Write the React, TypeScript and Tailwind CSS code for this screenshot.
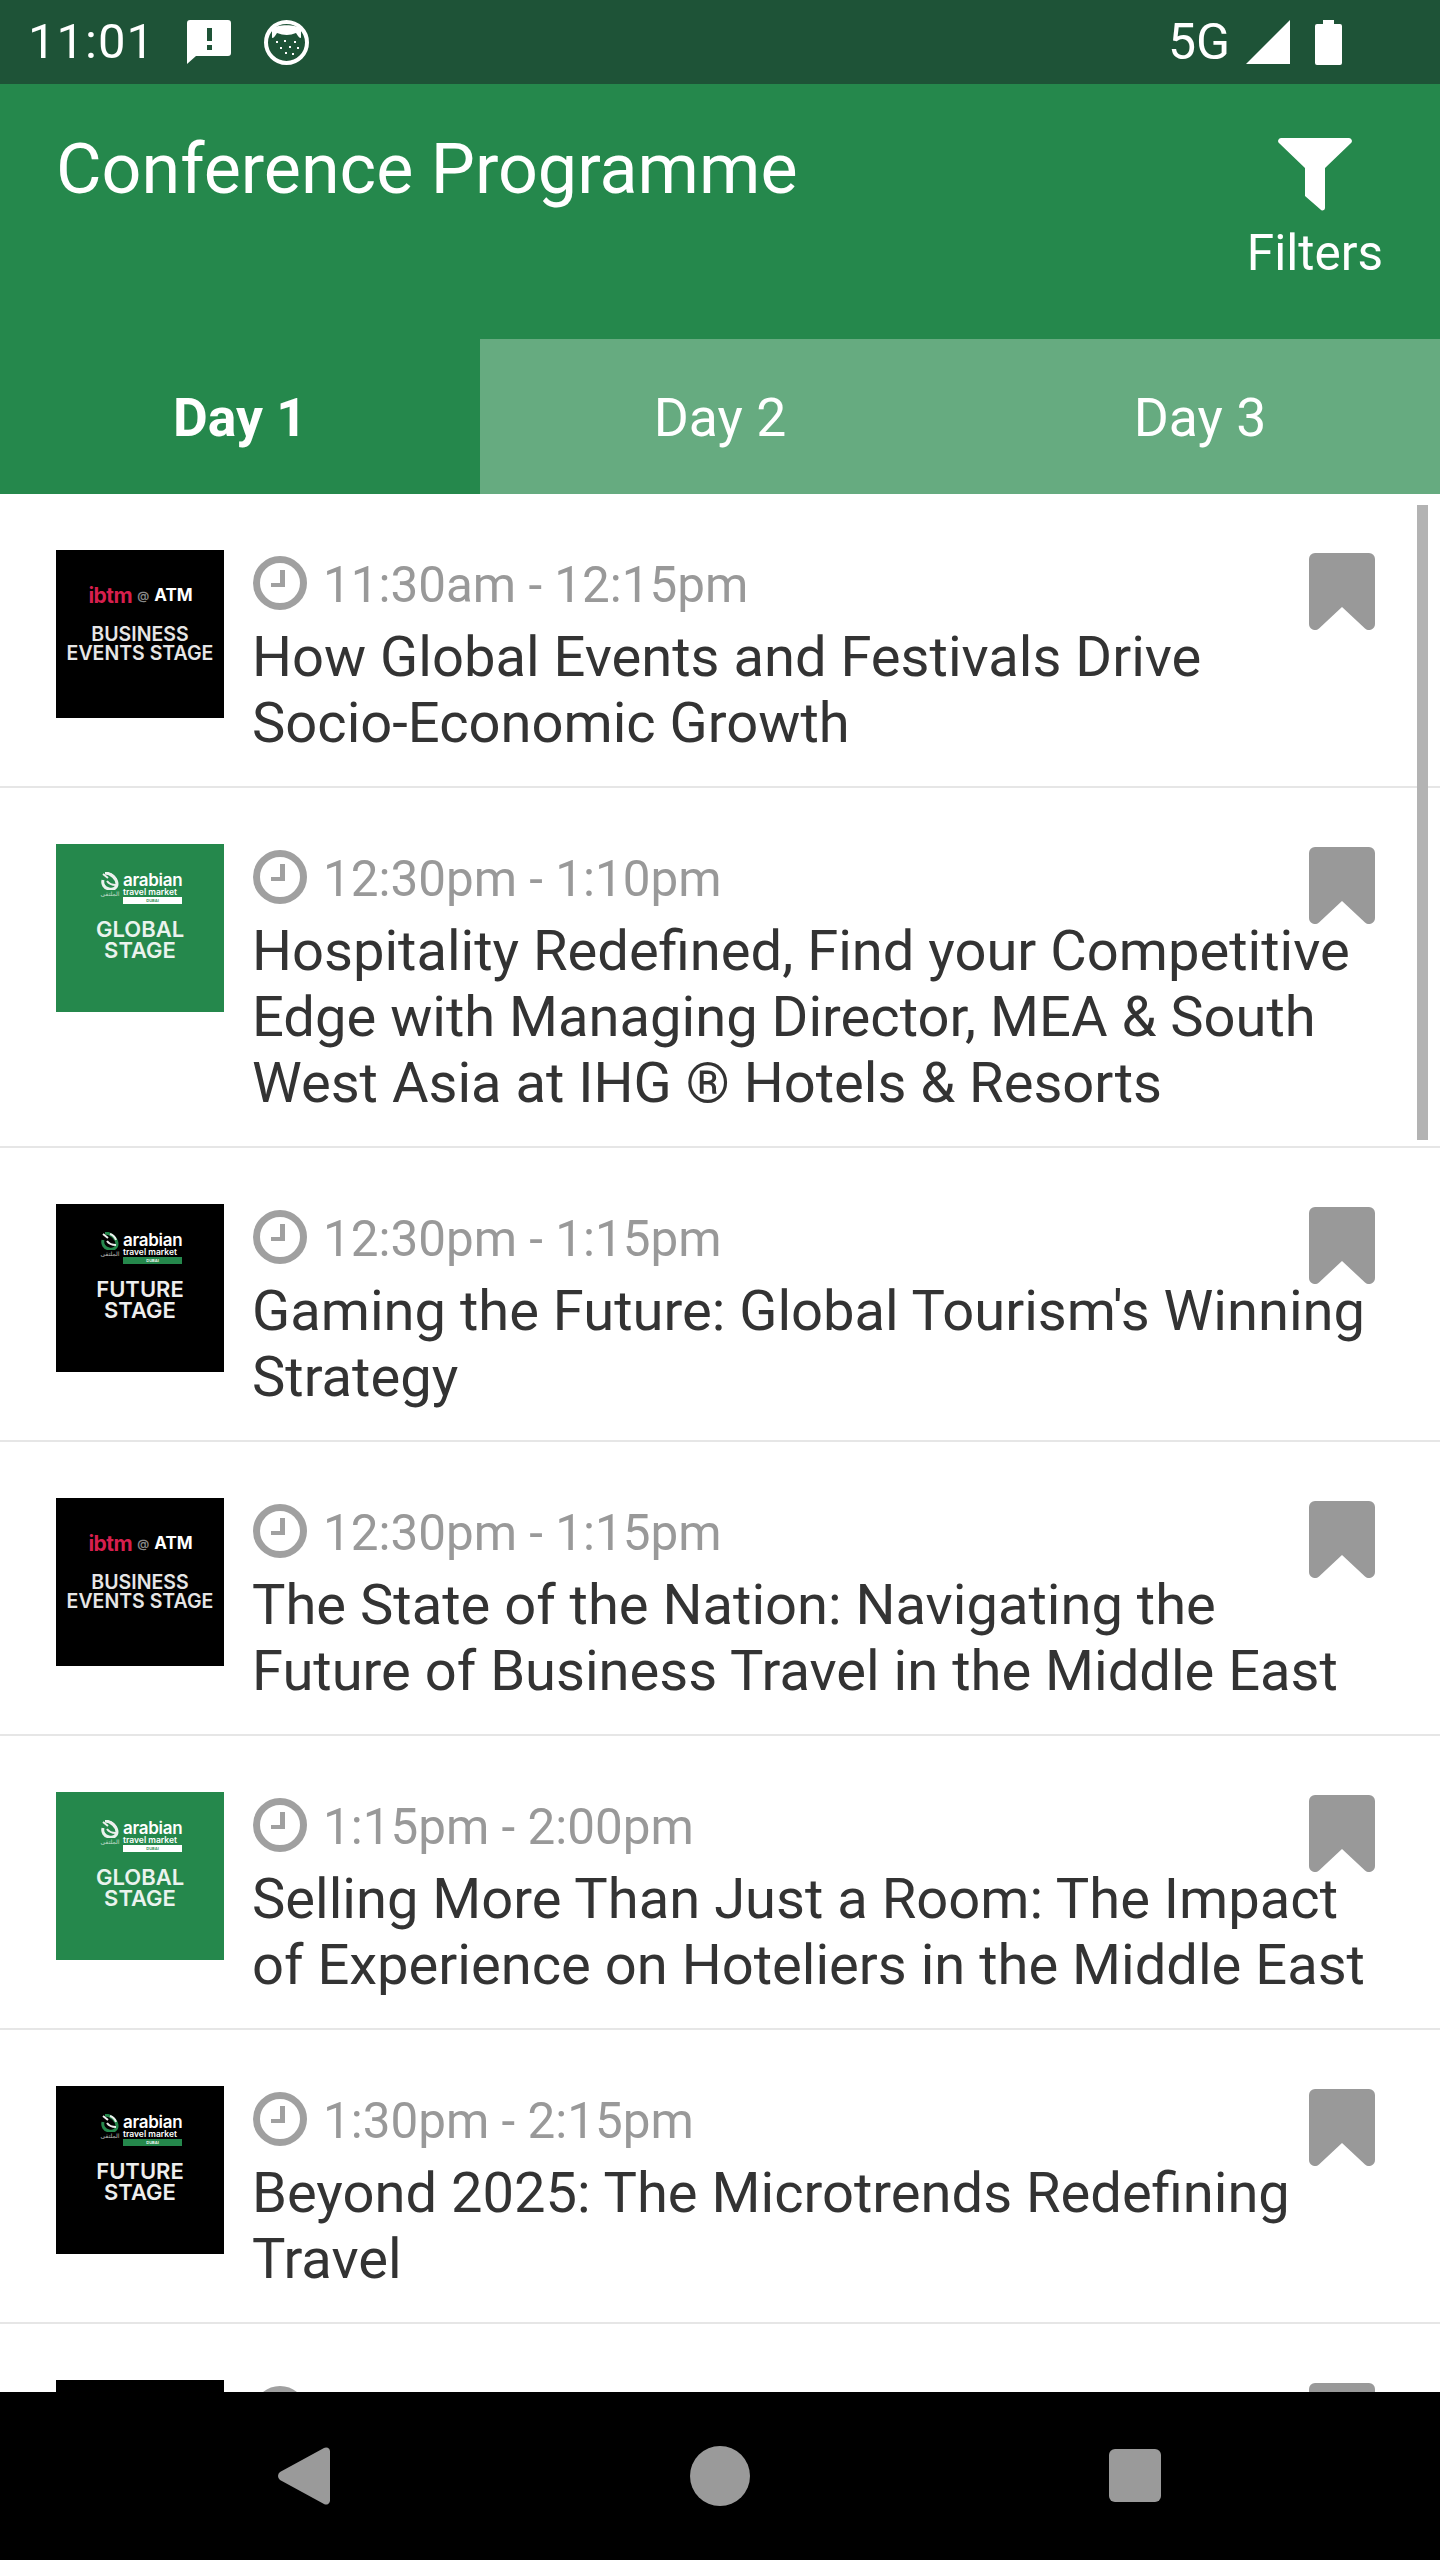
import React from "react";

type Stage = "business" | "global" | "future";

const sessions: { stage: Stage; time: string; title: string }[] = [
  { stage: "business", time: "11:30am - 12:15pm", title: "How Global Events and Festivals Drive Socio-Economic Growth" },
  { stage: "global", time: "12:30pm - 1:10pm", title: "Hospitality Redefined, Find your Competitive Edge with Managing Director, MEA & South West Asia at IHG ® Hotels & Resorts" },
  { stage: "future", time: "12:30pm - 1:15pm", title: "Gaming the Future: Global Tourism's Winning Strategy" },
  { stage: "business", time: "12:30pm - 1:15pm", title: "The State of the Nation: Navigating the Future of Business Travel in the Middle East" },
  { stage: "global", time: "1:15pm - 2:00pm", title: "Selling More Than Just a Room: The Impact of Experience on Hoteliers in the Middle East" },
  { stage: "future", time: "1:30pm - 2:15pm", title: "Beyond 2025: The Microtrends Redefining Travel" },
];

function Clock() {
  return (
    <svg width="54" height="54" viewBox="0 0 54 54" className="shrink-0">
      <circle cx="27" cy="27" r="23.5" fill="none" stroke="#a0a0a0" strokeWidth="7" />
      <path d="M27 14h5v17H18v-4h9z" fill="#a0a0a0" />
    </svg>
  );
}

function Bookmark() {
  return (
    <svg width="66" height="77" viewBox="0 0 66 77" className="absolute right-[65px] top-[59px]">
      <path
        d="M6 0h54a6 6 0 0 1 6 6v65a6 6 0 0 1-10 4.500L33 54 10 75.500A6 6 0 0 1 0 71V6a6 6 0 0 1 6-6z"
        fill="#999999"
      />
    </svg>
  );
}

function AtmLogo({ stage }: { stage: Stage }) {
  const green = stage === "global";
  return (
    <div className="flex items-start gap-[1px] text-white font-['Inter',sans-serif] font-semibold">
      <div className="flex flex-col items-center w-[24px]">
        <svg width="20" height="18" viewBox="0 0 20 18">
          <path d="M5 1c6 0 12 6 12 11 0 4-4 6-8 5-5-1-7-5-6-9" fill="none" stroke={green ? "#eaf3ee" : "#25884c"} strokeWidth="3" />
          <path d="M3 2l5 4M10 2c3 1 5 3 6 6M7 9c2 3 5 4 9 4" fill="none" stroke="#eeeeee" strokeWidth="2" />
        </svg>
        <span className="font-['DejaVu_Sans',sans-serif] font-normal text-[6px] leading-[7px] opacity-70 whitespace-nowrap">الملتقى</span>
      </div>
      <div className="flex flex-col w-[59px]">
        <span className="text-[17px] leading-[16px] tracking-[-0.3px]">arabian</span>
        <span className="text-[8.500px] leading-[9px] whitespace-nowrap">travel market</span>
        <span
          className={
            green
              ? "bg-white text-[#25884c] text-[4px] leading-[7px] text-center h-[7px]"
              : "bg-[#25884c] text-white text-[4px] leading-[7px] text-center h-[7px]"
          }
        >
          DUBAI
        </span>
      </div>
    </div>
  );
}

function Thumb({ stage }: { stage: Stage }) {
  if (stage === "business") {
    return (
      <div className="w-[168px] h-[168px] shrink-0 bg-black flex flex-col items-center pt-[36px] font-['Inter',sans-serif] font-semibold text-[#e6e6e6]">
        <div className="flex items-center gap-[5px] h-[20px] ml-[1px]">
          <span className="text-[#d61f4d] text-[21px] leading-[20px] font-bold tracking-[-0.5px]">ibtm</span>
          <span className="text-[#888888] text-[12px]">@</span>
          <span className="text-white text-[17px] font-bold">ATM</span>
        </div>
        <div className="mt-[19px] text-[19.500px] leading-[19px] text-center whitespace-nowrap">
          <div>BUSINESS</div>
          <div>EVENTS STAGE</div>
        </div>
      </div>
    );
  }
  return (
    <div
      className={
        stage === "global"
          ? "w-[168px] h-[168px] shrink-0 bg-[#25884c] flex flex-col items-center pt-[28px] font-['Inter',sans-serif] font-semibold text-[#eaf3ee]"
          : "w-[168px] h-[168px] shrink-0 bg-black flex flex-col items-center pt-[28px] font-['Inter',sans-serif] font-semibold text-[#eeeeee]"
      }
    >
      <AtmLogo stage={stage} />
      <div className="mt-[15px] text-[22px] leading-[21px] text-center whitespace-nowrap">
        <div>{stage === "global" ? "GLOBAL" : "FUTURE"}</div>
        <div>STAGE</div>
      </div>
    </div>
  );
}

function StatusBar() {
  return (
    <div className="h-[84px] shrink-0 bg-[#1e5337] flex items-center justify-between pl-[28px] pr-[98px] text-white text-[49px]">
      <div className="flex items-center">
        <span className="w-[159px] tracking-[1px]">11:01</span>
        <svg width="44" height="44" viewBox="0 0 44 44">
          <path d="M3 0h38a3 3 0 0 1 3 3v30a3 3 0 0 1-3 3H9l-9 8V3a3 3 0 0 1 3-3z" fill="#ffffff" />
          <rect x="20" y="8" width="5" height="13" fill="#1e5337" />
          <rect x="20" y="25" width="5" height="5" fill="#1e5337" />
        </svg>
        <svg width="45" height="45" viewBox="0 0 45 45" className="ml-[33px]">
          <circle cx="22.500" cy="22.500" r="20.500" fill="#1e5337" stroke="#ffffff" strokeWidth="4" />
          <path d="M8 9C12 4 33 4 37 9v9q-2 0-3-2l-2-3q-9 4-19 0l-2 3q-1 2-3 2z" fill="#ffffff" />
          <g fill="#ffffff">
            <rect x="12" y="21" width="2" height="2" />
            <rect x="20" y="20" width="2" height="2" />
            <rect x="30" y="21" width="2" height="2" />
            <rect x="16" y="27" width="2" height="2" />
            <rect x="25" y="26" width="2" height="2" />
            <rect x="33" y="27" width="2" height="2" />
            <rect x="21" y="32" width="2" height="2" />
            <rect x="28" y="33" width="2" height="2" />
          </g>
        </svg>
      </div>
      <div className="flex items-center">
        <span className="w-[78px] text-[50px] -ml-[2px]">5G</span>
        <svg width="44" height="44" viewBox="0 0 44 44">
          <path d="M44 0v44H0z" fill="#ffffff" />
        </svg>
        <svg width="27" height="45" viewBox="0 0 27 45" className="ml-[25px]">
          <path d="M8 0h11v4h6a2 2 0 0 1 2 2v37a2 2 0 0 1-2 2H2a2 2 0 0 1-2-2V6a2 2 0 0 1 2-2h6z" fill="#ffffff" />
        </svg>
      </div>
    </div>
  );
}

export default function App() {
  return (
    <div className="w-[1440px] h-[2560px] flex flex-col overflow-hidden bg-white font-['Roboto',sans-serif]">
      <StatusBar />

      {/* App bar */}
      <div className="h-[255px] shrink-0 bg-[#25884c] flex justify-between text-white pl-[56px] pr-[57px]">
        <div className="text-[70px] leading-[82px] pt-[44px]">Conference Programme</div>
        <div className="flex flex-col items-center pt-[54px]">
          <svg width="74" height="74" viewBox="0 0 74 74">
            <path d="M3 0h68a3 3 0 0 1 2.300 4.800L47 30v40a2.500 2.500 0 0 1-4.500 1.500L27 58V30L.7 4.800A3 3 0 0 1 3 0z" fill="#ffffff" />
          </svg>
          <div className="text-[49.500px] leading-[58px] mt-[12px]">Filters</div>
        </div>
      </div>

      {/* Tabs */}
      <div className="h-[155px] shrink-0 grid grid-cols-3 text-white text-[53.500px]">
        <div className="bg-[#25884c] flex items-center justify-center font-bold pt-[4px]">Day 1</div>
        <div className="bg-[#66ab80] flex items-center justify-center pt-[4px]">Day 2</div>
        <div className="bg-[#66ab80] flex items-center justify-center pt-[4px]">Day 3</div>
      </div>

      {/* List */}
      <div className="relative flex-1 overflow-hidden">
        <div className="absolute z-10 left-[1417px] top-[11px] w-[11px] h-[635px] bg-[#b3b3b3]" />
        {sessions.map((s, i) => (
          <div key={i} className="relative flex gap-[29px] pl-[56px] pt-[56px] pb-[31px] border-b-2 border-[#e6e6e6]">
            <Thumb stage={s.stage} />
            <div className="w-[1117px] pt-[6px]">
              <div className="flex items-center gap-[16px] h-[54px] text-[49.400px] text-[#999999]">
                <Clock />
                <span className="pt-[4px]">{s.time}</span>
              </div>
              <div className="mt-[13px] -ml-[1px] pt-[1px] -mb-[1px] text-[56.100px] leading-[66px] text-[#333333]">{s.title}</div>
            </div>
            <Bookmark />
          </div>
        ))}
        {/* next row, cut off by the nav bar */}
        <div className="relative flex gap-[29px] pl-[56px] pt-[56px]">
          <div className="w-[168px] h-[168px] shrink-0 bg-black" />
          <div className="pt-[6px]">
            <Clock />
          </div>
          <Bookmark />
        </div>
      </div>

      {/* Nav bar */}
      <div className="h-[168px] shrink-0 bg-black flex items-center relative">
        <svg width="53" height="58" viewBox="0 0 53 58" className="absolute left-[277px] top-[55px]">
          <path d="M47 1a4 4 0 0 1 6 3v50a4 4 0 0 1-6 3L3 33a5 5 0 0 1 0-8z" fill="#9a9a9a" />
        </svg>
        <div className="absolute left-[690px] top-[54px] w-[60px] h-[60px] rounded-full bg-[#9a9a9a]" />
        <div className="absolute left-[1109px] top-[57px] w-[52px] h-[53px] rounded-[6px] bg-[#9a9a9a]" />
      </div>
    </div>
  );
}
